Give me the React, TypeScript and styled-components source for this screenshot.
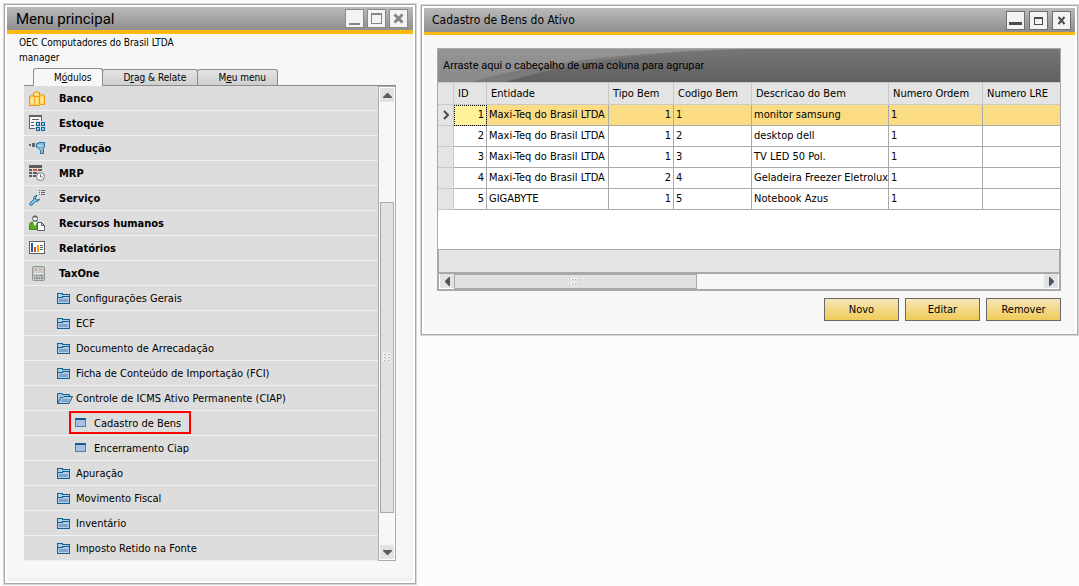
import React from "react";
import styled, { createGlobalStyle, css } from "styled-components";

const GlobalStyle = createGlobalStyle`
  *, *::before, *::after { box-sizing: border-box; }
  body {
    margin: 0;
    background: #fbfbfb;
    color: #000;
    font: 11px/14px "DejaVu Sans Condensed", Tahoma, "DejaVu Sans", sans-serif;
  }
  button { font: inherit; color: inherit; }
  a { color: inherit; text-decoration: none; }
  ul { list-style: none; margin: 0; padding: 0; }
  svg { display: block; flex: none; }
`;

/* ---------- Window frame ---------- */

const Desktop = styled.main`
  display: flex;
  align-items: flex-start;
  gap: 5px;
  padding: 4px 1px 2px 4px;
`;

const WindowFrame = styled.section<{ $sidebar?: boolean }>`
  border: 1px solid #a9a9a9;
  outline: 1px solid #d6d6d6;
  padding: 2px;
  background: #fff;
  min-width: 0;
  ${(p) =>
    p.$sidebar
      ? css`flex: 0 0 412px;`
      : css`
          flex: 1;
          margin-top: 1px;
        `}
`;

const TitleBar = styled.header<{ $large?: boolean }>`
  display: flex;
  align-items: center;
  justify-content: space-between;
  height: 27px;
  padding: 0 ${(p) => (p.$large ? 5 : 4)}px 0 ${(p) => (p.$large ? 9 : 8)}px;
  background: linear-gradient(#bababa, #8f8f8f);
  border-bottom: ${(p) => (p.$large ? 4 : 3)}px solid #fdb813;
`;

const Title = styled.h1<{ $large?: boolean }>`
  margin: 0;
  font-weight: normal;
  font-size: ${(p) => (p.$large ? 15 : 12)}px;
  line-height: 20px;
  font-family: ${(p) => (p.$large ? "Roboto, sans-serif" : "inherit")};
`;

const WindowControls = styled.div<{ $large?: boolean }>`
  display: flex;
  gap: ${(p) => (p.$large ? 3 : 4)}px;
`;

const ControlButton = styled.button<{ $muted?: boolean }>`
  display: grid;
  place-items: center;
  width: 19px;
  height: 19px;
  padding: 0;
  border: 1px solid ${(p) => (p.$muted ? "#8a8a8a" : "#707070")};
  background: #f3f3f3;
  color: ${(p) => (p.$muted ? "#858585" : "#4c4c4c")};
`;

/* ---------- Main menu ---------- */

const MenuBody = styled.div`
  padding: 0 14px 16px 12px;
  background: #f7f7f7;
  border: solid #f1f1f1;
  border-width: 0 3px 4px 0;
`;

const Account = styled.div`
  padding-top: 1px;
  font-size: 10px;
  line-height: 15px;
`;

const Modules = styled.div`
  margin: 3px 0 0 5px;
`;

const TabList = styled.div`
  display: flex;
  align-items: flex-end;
  padding-left: 9px;
  border-bottom: 1px solid #8c8c8c;
`;

const Tab = styled.button<{ $active?: boolean }>`
  height: ${(p) => (p.$active ? 18 : 16)}px;
  margin-bottom: ${(p) => (p.$active ? -1 : 0)}px;
  padding: 0 11px 0 20px;
  border: 1px solid #8c8c8c;
  border-bottom: 0;
  border-radius: 3px 3px 0 0;
  font-size: 10px;
  background: ${(p) => (p.$active ? "#f7f7f7" : "linear-gradient(#e4e4e4, #cfcfcf)")};
  & + & { margin-left: -1px; }
`;

const ModuleArea = styled.div`
  display: flex;
`;

const Tree = styled.ul`
  flex: 1;
  min-width: 0;
`;

const TreeItem = styled.li`
  display: flex;
  align-items: flex-start;
  height: 25px;
  background: #ddd;
  border-bottom: 1px solid #f0f0f0;
`;

const levelStyles = {
  1: css`
    grid-template-columns: 30px auto;
    padding-left: 5px;
    font-weight: bold;
  `,
  2: css`
    grid-template-columns: 19px auto;
    padding-left: 33px;
  `,
  3: css`
    grid-template-columns: 19px auto;
    margin-left: 45px;
    padding: 0 8px 0 4px;
    border: 2px solid transparent;
  `,
};

const TreeLink = styled.a<{ $level: 1 | 2 | 3; $marked?: boolean }>`
  display: grid;
  align-items: center;
  height: ${(p) => (p.$level === 3 ? 23 : 24)}px;
  white-space: nowrap;
  ${(p) => levelStyles[p.$level]}
  ${(p) => p.$marked && css`border-color: #f00;`}
`;

const TreeLabel = styled.span`
  padding-top: 2px;
`;

/* ---------- Scroll bars ---------- */

const VScroll = styled.div`
  display: flex;
  flex-direction: column;
  width: 18px;
  padding: 1px;
  border: 1px solid #a9a9a9;
  background: #fff;
`;

const HScroll = styled.div`
  display: flex;
  height: 18px;
  padding: 0 1px;
  border: 1px solid #a9a9a9;
  border-top-width: 2px;
  background: #fff;
`;

const ArrowButton = styled.button`
  flex: none;
  display: grid;
  place-items: center;
  width: 14px;
  height: 14px;
  padding: 0;
  border: 0;
  background: #e2e2e2;
  color: #5c5c5c;
`;

const Track = styled.div<{ $vertical?: boolean }>`
  flex: 1;
  display: flex;
  flex-direction: ${(p) => (p.$vertical ? "column" : "row")};
  background: #f7f7f7;
`;

const TrackGap = styled.div<{ $grow: number }>`
  flex: ${(p) => p.$grow} 0 0;
`;

const Thumb = styled.div<{ $grow: number }>`
  flex: ${(p) => p.$grow} 0 0;
  display: grid;
  place-items: center;
  border: 1px solid #a9a9a9;
  background: #e1e1e1;
`;

/* ---------- Asset grid ---------- */

const AssetBody = styled.div`
  padding: 13px 14px 11px 13px;
  background: #f7f7f7;
`;

const GridFrame = styled.div`
  border: 1px solid #a9a9a9;
  background: #fff;
`;

const GroupPanel = styled.div`
  position: relative;
  display: flex;
  align-items: center;
  height: 33px;
  padding-left: 5px;
  background: linear-gradient(#767676, #606060);
`;

const Sheen = styled.svg`
  position: absolute;
  inset: 0;
  width: 315px;
  height: 33px;
`;

const GroupHint = styled.span`
  position: relative;
  font-family: Roboto, Tahoma, sans-serif;
`;

const TableArea = styled.div`
  min-height: 167px;
  overflow: hidden;
`;

const Table = styled.table`
  width: 100%;
  table-layout: fixed;
  border-collapse: separate;
  border-spacing: 0;
`;

const HeadCell = styled.th`
  height: 23px;
  padding: 0 0 0 4px;
  border: solid #c9c9c9;
  border-width: 1px 1px 1px 0;
  background: #e4e4e4;
  font-weight: normal;
  text-align: left;
  white-space: nowrap;
  &:last-child { border-right: 0; }
`;

const Row = styled.tr<{ $selected?: boolean }>`
  background: ${(p) => (p.$selected ? "#fcdc82" : "#fff")};
`;

const Cell = styled.td<{ $numeric?: boolean; $focused?: boolean }>`
  height: 21px;
  padding: 0 2px;
  border: solid #a9a9a9;
  border-width: 0 1px 1px 0;
  text-align: ${(p) => (p.$numeric ? "right" : "left")};
  white-space: nowrap;
  &:last-child { border-right: 0; }
  ${(p) =>
    p.$focused &&
    css`
      background: #fff29b;
      outline: 1px dotted #000;
      outline-offset: -1px;
    `}
`;

const Indicator = styled.td`
  padding: 0;
  border: solid #c9c9c9;
  border-width: 0 1px 1px 0;
  background: #e4e4e4;
  & > svg { margin: auto; }
`;

const Summary = styled.div`
  height: 23px;
  border: solid #a9a9a9;
  border-width: 1px 1px 0;
  background: #e4e4e4;
`;

const Actions = styled.div`
  display: flex;
  justify-content: flex-end;
  gap: 6px;
  margin-top: 7px;
`;

const ActionButton = styled.button`
  width: 75px;
  height: 23px;
  padding: 0;
  border: 1px solid #68686a;
  background: linear-gradient(#f6e6b9, #f0cb58);
`;

/* ---------- Icons ---------- */

const MinimizeIcon = ({ heavy }: { heavy?: boolean }) => (
  <svg width="15" height="15" fill="currentColor" shapeRendering="crispEdges">
    {heavy ? <rect x="1" y="9" width="13" height="3" /> : <rect x="2" y="12" width="11" height="2" />}
  </svg>
);

const MaximizeIcon = ({ small }: { small?: boolean }) => (
  <svg width="15" height="15" fill="none" stroke="currentColor" shapeRendering="crispEdges">
    {small ? (
      <>
        <rect x="3.5" y="4.5" width="8" height="7" />
        <path d="M3 5.5h9" />
      </>
    ) : (
      <>
        <rect x="2.5" y="2.5" width="10" height="10" />
        <path d="M2 3.5h11" />
      </>
    )}
  </svg>
);

const CloseIcon = ({ small }: { small?: boolean }) => (
  <svg width="15" height="15" fill="none" stroke="currentColor" strokeWidth={small ? 2 : 3}>
    <path d={small ? "M4.5 4l6 7M10.5 4l-6 7" : "M3.500 3.500l8 8M11.500 3.500l-8 8"} />
  </svg>
);

const CoinsIcon = () => (
  <svg width="16" height="16" fill="#fcd765" stroke="#f0980f">
    <path d="M4.5 2.5q3-2 6 0v12h-6z" />
    <path d="M10.5 5.5q2.5-2 5 0v9h-5z" />
    <path d="M.5 6.5q2.500-2 5 0v9h-5z" />
    <path d="M5.5 15.5h5v-9h-5" />
    <path d="M2 8.5h2M2 10.5h2M2 12.5h2M7 4.5h2M7 8.5h2M7 10.5h2M7 12.5h2M12 7.5h2M12 9.5h2M12 11.5h2" stroke="#fff3c0" />
  </svg>
);

const StockIcon = () => (
  <svg width="16" height="16" shapeRendering="crispEdges">
    <path d="M0 0h13v6h-7v8h-6z" fill="#f8f8f8" />
    <path d="M0 0h13v2H0zM0 2h1v12H0zM12 2h1v4h-1zM0 13h6v1H0zM3 4h7v1H3zM2 7h3v1H2zM2 10h3v1H2z" fill="#5f6164" />
    <g fill="#a9cfe6" stroke="#10639c">
      <path d="M7.5 7.5h3v3h-3zM12.5 7.5h3v3h-3zM7.5 12.5h3v3h-3zM12.5 12.5h3v3h-3z" />
    </g>
  </svg>
);

const DrillIcon = () => (
  <svg width="16" height="16">
    <path d="M0 4h2v2H0zM3 3h3v4H3z" fill="#66686b" />
    <path d="M7.5 3.5h2v-1h6v4l-1 2v5h-3v-3l-3-3h-1z" fill="#8db9d8" stroke="#2b76a8" />
    <path d="M9 5.5h4" stroke="#d6e8f3" />
  </svg>
);

const PlanningIcon = () => (
  <svg width="16" height="16">
    <path d="M0 0h13v3H0zM0 4h3v2H0zM9 4h4v2H9zM0 7h3v2H0zM4 7h4v2H4zM0 10h3v2H0zM4 10h3v2H4z" fill="#5b5d60" />
    <path d="M4 4h4v2H4z" fill="#e2560c" />
    <circle cx="11.5" cy="11.5" r="4" fill="#f7f7f7" stroke="#74777a" />
    <path d="M11.5 9v3h2" fill="none" stroke="#74777a" />
  </svg>
);

const ServiceIcon = () => (
  <svg width="16" height="16">
    <path d="M10 .5h1M12 .5h4M10 2.5h1M12 2.5h4M10 4.5h1M12 4.5h4" stroke="#66686b" />
    <path
      d="M7 5.5q-2.500.500-2.500 4L1 13q-1 1.500 0 2t2 0L6.500 11.500q3 .5 4-2.500L8.500 10 6.500 9.500 6.500 7.500 8 5.500z"
      fill="#8fc0df"
      stroke="#1f6fa5"
    />
  </svg>
);

const PeopleIcon = () => (
  <svg width="16" height="16">
    <path d="M.5 14.5V9.500q0-2 3-2.500h5q2 1 2 3v4.500z" fill="#5bab2a" stroke="#3c8a1c" />
    <path d="M4 7h4l-2 4z" fill="#fff" />
    <circle cx="6" cy="3.5" r="2.5" fill="#f4f4f4" stroke="#5b5d60" />
    <path d="M3.500 3q0-2.500 2.500-2.500T8.500 3q-2-1.500-5 0z" fill="#5b5d60" />
    <path d="M8.500 7.500h4l3 3v5h-7zM12.500 7.500v3h3" fill="#fff" stroke="#5b5d60" />
  </svg>
);

const ReportIcon = () => (
  <svg width="16" height="16" shapeRendering="crispEdges">
    <rect x=".5" y="1.5" width="15" height="12" fill="#fff" stroke="#5f6164" />
    <path d="M2 3h2v9H2z" fill="#1c5fa8" />
    <path d="M5 7h2v5H5z" fill="#d8481c" />
    <path d="M8 5h2v7H8z" fill="#f3a01a" />
    <path d="M11 5.5h3M11 7.5h3M11 9.5h3" stroke="#5f6164" />
  </svg>
);

const CalculatorIcon = () => (
  <svg width="17" height="17">
    <rect x="3.5" y="1.5" width="12" height="14" rx="1" fill="#c4c8c5" stroke="#8f9a92" />
    <path d="M5 3h9v4H5z" fill="#d6cbc6" />
    <path d="M6 4h2v2H6zM10 4h3v1h-3z" fill="#b3ada9" />
    <path d="M5 8.5h9" stroke="#eee" />
    <path d="M5 10h1v1H5zM7 10h2v1H7zM10 10h4v1h-4zM5 12h1v2H5zM7 12h2v2H7zM10 12h1v2h-1zM12 12h2v2h-2z" fill="#868b88" />
  </svg>
);

const FolderIcon = () => (
  <svg width="13" height="11" shapeRendering="crispEdges">
    <path d="M0 0h6v1h7v10H0z" fill="#0d6294" />
    <path d="M1 1h4v1h7v1H5v1H1zM1 5h5V4h6v6H1z" fill="#b4cbe4" />
    <path d="M2 6h9v3H2z" fill="#7fa4ce" />
  </svg>
);

const OpenFolderIcon = () => (
  <svg width="16" height="11">
    <path d="M.5 10.5v-10h5v1h7v3" fill="#a7c0df" stroke="#0d6294" />
    <path d="M.5 10.5l3.500-6h2l1-1h8.500l-3.500 7z" fill="#b4cbe4" stroke="#0d6294" />
    <path d="M3.500 9l2-3h7.500l-1.500 3z" fill="#7fa4ce" />
  </svg>
);

const FormIcon = () => (
  <svg width="11" height="9" shapeRendering="crispEdges">
    <rect x=".5" y=".5" width="10" height="8" fill="#a7c0df" stroke="#4f7fb0" />
    <path d="M0 0h11v2H0z" fill="#0b5f94" />
  </svg>
);

const arrowPaths = {
  up: "M5 3h1l4 4v1H1V7z",
  down: "M1 3h9v1L6 8H5L1 4z",
  left: "M8 1v9H7L3 6V5l4-4z",
  right: "M3 1v9h1l4-4V5L4 1z",
};

const ArrowIcon = ({ to }: { to: keyof typeof arrowPaths }) => (
  <svg width="11" height="11" fill={to === "left" || to === "right" ? "#475766" : "#5c5c5c"}>
    <path d={arrowPaths[to]} />
  </svg>
);

const Grip = ({ rows, cols }: { rows: number; cols: number }) => {
  const stepY = rows > cols ? 3 : 4;
  const stepX = rows > cols ? 4 : 3;
  return (
    <svg width={cols * stepX} height={rows * stepY} shapeRendering="crispEdges">
      {Array.from({ length: rows * cols }, (_, i) => {
        const x = (i % cols) * stepX;
        const y = Math.floor(i / cols) * stepY;
        return (
          <g key={i}>
            <rect x={x} y={y} width="2" height="2" fill="#fff" />
            <rect x={x + 1} y={y + 1} width="1" height="1" fill="#98a2ac" />
          </g>
        );
      })}
    </svg>
  );
};

const RowMarker = () => (
  <svg width="8" height="10" fill="none" stroke="#4a4a4a" strokeWidth="2">
    <path d="M2 1l4 4-4 4" />
  </svg>
);

/* ---------- Data ---------- */

type Node = { label: string; level: 1 | 2 | 3; icon: React.ReactNode; marked?: boolean };

const tree: Node[] = [
  { label: "Banco", level: 1, icon: <CoinsIcon /> },
  { label: "Estoque", level: 1, icon: <StockIcon /> },
  { label: "Produção", level: 1, icon: <DrillIcon /> },
  { label: "MRP", level: 1, icon: <PlanningIcon /> },
  { label: "Serviço", level: 1, icon: <ServiceIcon /> },
  { label: "Recursos humanos", level: 1, icon: <PeopleIcon /> },
  { label: "Relatórios", level: 1, icon: <ReportIcon /> },
  { label: "TaxOne", level: 1, icon: <CalculatorIcon /> },
  { label: "Configurações Gerais", level: 2, icon: <FolderIcon /> },
  { label: "ECF", level: 2, icon: <FolderIcon /> },
  { label: "Documento de Arrecadação", level: 2, icon: <FolderIcon /> },
  { label: "Ficha de Conteúdo de Importação (FCI)", level: 2, icon: <FolderIcon /> },
  { label: "Controle de ICMS Ativo Permanente (CIAP)", level: 2, icon: <OpenFolderIcon /> },
  { label: "Cadastro de Bens", level: 3, icon: <FormIcon />, marked: true },
  { label: "Encerramento Ciap", level: 3, icon: <FormIcon /> },
  { label: "Apuração", level: 2, icon: <FolderIcon /> },
  { label: "Movimento Fiscal", level: 2, icon: <FolderIcon /> },
  { label: "Inventário", level: 2, icon: <FolderIcon /> },
  { label: "Imposto Retido na Fonte", level: 2, icon: <FolderIcon /> },
];

const columns = [
  { title: "ID", width: 33 },
  { title: "Entidade", width: 122 },
  { title: "Tipo Bem", width: 65 },
  { title: "Codigo Bem", width: 78 },
  { title: "Descricao do Bem", width: 137 },
  { title: "Numero Ordem", width: 94 },
  { title: "Numero LRE" },
];

const assets = [
  { id: 1, entity: "Maxi-Teq do Brasil LTDA", type: 1, code: "1", description: "monitor samsung", order: "1" },
  { id: 2, entity: "Maxi-Teq do Brasil LTDA", type: 1, code: "2", description: "desktop dell", order: "1" },
  { id: 3, entity: "Maxi-Teq do Brasil LTDA", type: 1, code: "3", description: "TV LED 50 Pol.", order: "1" },
  { id: 4, entity: "Maxi-Teq do Brasil LTDA", type: 2, code: "4", description: "Geladeira Freezer Eletrolux", order: "1" },
  { id: 5, entity: "GIGABYTE", type: 1, code: "5", description: "Notebook Azus", order: "1" },
];

/* ---------- Windows ---------- */

const MainMenu = () => (
  <WindowFrame $sidebar>
    <TitleBar $large>
      <Title $large>Menu principal</Title>
      <WindowControls $large>
        <ControlButton $muted aria-label="Minimizar"><MinimizeIcon /></ControlButton>
        <ControlButton $muted aria-label="Maximizar"><MaximizeIcon /></ControlButton>
        <ControlButton $muted aria-label="Fechar"><CloseIcon /></ControlButton>
      </WindowControls>
    </TitleBar>
    <MenuBody>
      <Account>
        <div>OEC Computadores do Brasil LTDA</div>
        <div>manager</div>
      </Account>
      <Modules>
        <TabList role="tablist">
          <Tab $active role="tab" aria-selected="true">M<u>ó</u>dulos</Tab>
          <Tab role="tab" aria-selected="false">D<u>r</u>ag &amp; Relate</Tab>
          <Tab role="tab" aria-selected="false">M<u>e</u>u menu</Tab>
        </TabList>
        <ModuleArea>
          <Tree>
            {tree.map((node) => (
              <TreeItem key={node.label}>
                <TreeLink href="#" $level={node.level} $marked={node.marked}>
                  {node.icon}
                  <TreeLabel>{node.label}</TreeLabel>
                </TreeLink>
              </TreeItem>
            ))}
          </Tree>
          <VScroll>
            <ArrowButton aria-label="Rolar para cima"><ArrowIcon to="up" /></ArrowButton>
            <Track $vertical>
              <TrackGap $grow={100} />
              <Thumb $grow={311}><Grip rows={3} cols={2} /></Thumb>
              <TrackGap $grow={32} />
            </Track>
            <ArrowButton aria-label="Rolar para baixo"><ArrowIcon to="down" /></ArrowButton>
          </VScroll>
        </ModuleArea>
      </Modules>
    </MenuBody>
  </WindowFrame>
);

const AssetWindow = () => (
  <WindowFrame>
    <TitleBar>
      <Title>Cadastro de Bens do Ativo</Title>
      <WindowControls>
        <ControlButton aria-label="Minimizar"><MinimizeIcon heavy /></ControlButton>
        <ControlButton aria-label="Maximizar"><MaximizeIcon small /></ControlButton>
        <ControlButton aria-label="Fechar"><CloseIcon small /></ControlButton>
      </WindowControls>
    </TitleBar>
    <AssetBody>
      <GridFrame>
        <GroupPanel>
          <Sheen viewBox="0 0 315 33" aria-hidden="true">
            <defs>
              <linearGradient id="sheen" x1="0" y1="0" x2="0" y2="1">
                <stop offset="0" stopColor="#949494" />
                <stop offset="1" stopColor="#8a8a8a" />
              </linearGradient>
            </defs>
            <path d="M0 0H315Q160 4 68 33H0z" fill="#7b7b7b" />
            <path d="M0 0H300Q120 6 34 33H0z" fill="url(#sheen)" />
          </Sheen>
          <GroupHint>Arraste aqui o cabeçalho de uma coluna para agrupar</GroupHint>
        </GroupPanel>
        <TableArea>
          <Table>
            <colgroup>
              <col width={16} />
              {columns.map((c) => <col key={c.title} width={c.width} />)}
            </colgroup>
            <thead>
              <tr>
                <HeadCell aria-label="Linha atual" />
                {columns.map((c) => <HeadCell key={c.title} scope="col">{c.title}</HeadCell>)}
              </tr>
            </thead>
            <tbody>
              {assets.map((a, i) => (
                <Row key={a.id} $selected={i === 0}>
                  <Indicator>{i === 0 && <RowMarker />}</Indicator>
                  <Cell $numeric $focused={i === 0}>{a.id}</Cell>
                  <Cell>{a.entity}</Cell>
                  <Cell $numeric>{a.type}</Cell>
                  <Cell>{a.code}</Cell>
                  <Cell>{a.description}</Cell>
                  <Cell>{a.order}</Cell>
                  <Cell />
                </Row>
              ))}
            </tbody>
          </Table>
        </TableArea>
        <Summary />
        <HScroll>
          <ArrowButton aria-label="Rolar para a esquerda"><ArrowIcon to="left" /></ArrowButton>
          <Track>
            <Thumb $grow={242}><Grip rows={2} cols={3} /></Thumb>
            <TrackGap $grow={348} />
          </Track>
          <ArrowButton aria-label="Rolar para a direita"><ArrowIcon to="right" /></ArrowButton>
        </HScroll>
      </GridFrame>
      <Actions>
        <ActionButton>Novo</ActionButton>
        <ActionButton>Editar</ActionButton>
        <ActionButton>Remover</ActionButton>
      </Actions>
    </AssetBody>
  </WindowFrame>
);

export default function App() {
  return (
    <>
      <GlobalStyle />
      <Desktop>
        <MainMenu />
        <AssetWindow />
      </Desktop>
    </>
  );
}
